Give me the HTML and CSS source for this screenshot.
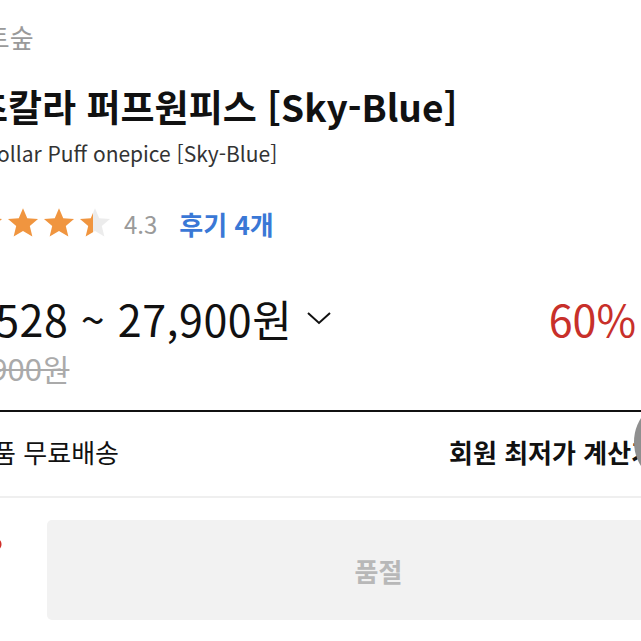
FILE: index.html
```html
<!DOCTYPE html>
<html lang="ko">
<head>
  <meta charset="UTF-8">
  <title>셔츠칼라 퍼프원피스</title>
  <link rel="stylesheet" href="styles.css">
</head>
<body>
  <div class="page">
    <div class="info">
      <div class="brand">에이토숲</div>
      <h1 class="title">셔츠칼라 퍼프원피스 [Sky-Blue]</h1>
      <p class="subtitle">Shirts Collar Puff onepice [Sky-Blue]</p>

      <div class="rating">
        <div class="stars">
          <svg class="star" viewBox="0 0 24 24"><path d="M12 1.5l3 7.1 7.6.6-5.8 5 1.8 7.4L12 17.6l-6.6 4 1.8-7.4-5.8-5 7.6-.6z"/></svg>
          <svg class="star" viewBox="0 0 24 24"><path d="M12 1.5l3 7.1 7.6.6-5.8 5 1.8 7.4L12 17.6l-6.6 4 1.8-7.4-5.8-5 7.6-.6z"/></svg>
          <svg class="star" viewBox="0 0 24 24"><path d="M12 1.5l3 7.1 7.6.6-5.8 5 1.8 7.4L12 17.6l-6.6 4 1.8-7.4-5.8-5 7.6-.6z"/></svg>
          <svg class="star" viewBox="0 0 24 24"><path d="M12 1.5l3 7.1 7.6.6-5.8 5 1.8 7.4L12 17.6l-6.6 4 1.8-7.4-5.8-5 7.6-.6z"/></svg>
          <svg class="star half" viewBox="0 0 24 24">
            <defs>
              <linearGradient id="halfFill">
                <stop offset="45%" stop-color="#f0953f"/>
                <stop offset="45%" stop-color="#ececec"/>
              </linearGradient>
            </defs>
            <path fill="url(#halfFill)" d="M12 1.5l3 7.1 7.6.6-5.8 5 1.8 7.4L12 17.6l-6.6 4 1.8-7.4-5.8-5 7.6-.6z"/>
          </svg>
        </div>
        <span class="score">4.3</span>
        <a class="reviews" href="#">후기 4개</a>
      </div>

      <div class="price-row">
        <span class="price">11,528 ~ 27,900원</span>
        <svg class="chevron" viewBox="0 0 26 16"><path d="M2 3l11 10L24 3"/></svg>
        <span class="discount">60%</span>
      </div>
      <div class="original">69,900원</div>
    </div>

    <div class="divider-thick"></div>

    <div class="shipping">
      <span class="free">전 상품 무료배송</span>
      <span class="calc">회원 최저가 계산기</span>
    </div>

    <div class="divider-light"></div>

    <div class="buy-bar">
      <div class="wish">
        <svg viewBox="0 0 24 24"><path d="M12 21.5l-1.5-1.3C5 15.3 1.5 12.2 1.5 8.2 1.5 5 4 2.5 7.2 2.5c1.8 0 3.6.9 4.8 2.3 1.2-1.4 3-2.3 4.8-2.3 3.2 0 5.7 2.5 5.7 5.7 0 4-3.5 7.1-9 12z"/></svg>
      </div>
      <button class="soldout" disabled>품절</button>
    </div>
  </div>

  <div class="float-btn"></div>
</body>
</html>
```

FILE: styles.css
```css
body {
  margin: 0;
  background: #fff;
  font-family: "Noto Sans CJK KR", "Noto Sans", sans-serif;
  color: #111;
  overflow: hidden;
  position: relative;
  height: 641px;
}

.page {
  width: 800px;
  margin-left: -60px;
}

.brand {
  margin-top: 19px;
  margin-left: -2px;
  font-size: 26px;
  line-height: 36px;
  color: #9a9a9a;
}

.title {
  margin: 27px 0 0;
  font-size: 37px;
  font-weight: 700;
  line-height: 48px;
}

.subtitle {
  margin: 9px 0 0 -19px;
  font-size: 21px;
  line-height: 28px;
  color: #333;
}

.rating {
  display: flex;
  align-items: center;
  margin-top: 38px;
  height: 36px;
}

.stars {
  display: flex;
  gap: 2px;
  margin-left: -6px;
}

.star {
  width: 34px;
  height: 34px;
  fill: #f0953f;
}

.score {
  margin-left: 12px;
  font-size: 24px;
  color: #9a9a9a;
}

.reviews {
  margin-left: 22px;
  font-size: 26px;
  font-weight: 700;
  color: #3a78d6;
  text-decoration: none;
}

.price-row {
  display: flex;
  align-items: center;
  margin-top: 51px;
  width: 696px;
  height: 52px;
}

.price {
  margin-left: -6px;
  font-size: 43px;
  letter-spacing: 0.5px;
  color: #111;
}

.chevron {
  width: 26px;
  height: 16px;
  margin-left: 14px;
  fill: none;
  stroke: #111;
  stroke-width: 2;
}

.discount {
  margin-left: auto;
  font-size: 43px;
  color: #c8302a;
}

.original {
  margin-top: 8px;
  margin-left: 8px;
  font-family: "Noto Sans", "Noto Sans CJK KR", sans-serif;
  font-size: 30px;
  line-height: 36px;
  color: #aaa;
  text-decoration: line-through;
  text-decoration-thickness: 2px;
}

.divider-thick {
  margin-top: 22px;
  height: 2px;
  background: #111;
}

.shipping {
  display: flex;
  justify-content: space-between;
  align-items: center;
  box-sizing: border-box;
  width: 715px;
  height: 84px;
  padding-bottom: 6px;
  font-size: 26px;
}

.free {
  margin-left: -3px;
}

.calc {
  font-weight: 700;
}

.divider-light {
  height: 2px;
  background: #efefef;
}

.buy-bar {
  display: flex;
  align-items: flex-start;
  margin-top: 22px;
  gap: 44px;
}

.wish {
  display: flex;
  justify-content: flex-end;
  width: 63px;
  padding-top: 16px;
}

.wish svg {
  width: 24px;
  height: 24px;
  fill: #d0302a;
}

.soldout {
  width: 663px;
  height: 100px;
  border: none;
  border-radius: 5px;
  background: #f2f2f2;
  font-family: inherit;
  font-size: 26px;
  font-weight: 700;
  color: #b8b8b8;
}

.float-btn {
  position: absolute;
  left: 634px;
  top: 397px;
  width: 90px;
  height: 90px;
  border-radius: 50%;
  background: #8f8f8f;
}
```
